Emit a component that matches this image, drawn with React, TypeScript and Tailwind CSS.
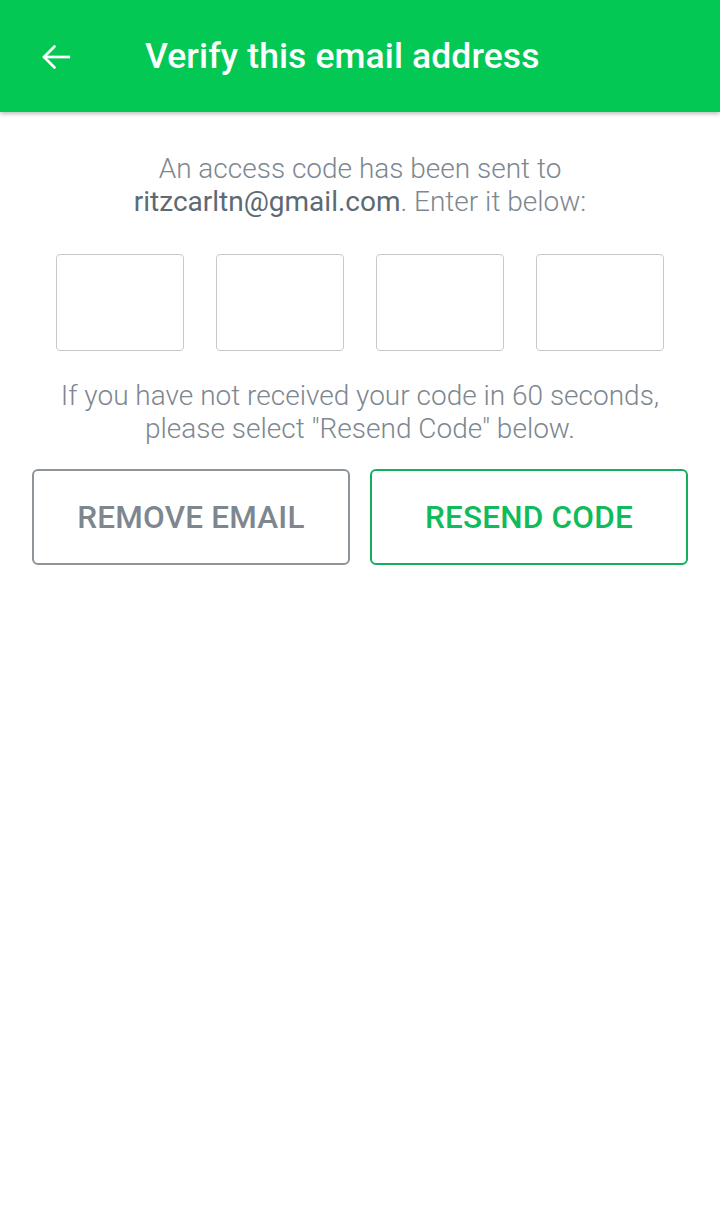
import React from "react";

export default function App() {
  return (
    <div className="w-[720px] h-[1232px] bg-white" style={{ fontFamily: "Roboto, 'Noto Sans', sans-serif" }}>
      <div className="h-[112px] bg-[#03c853] flex items-center shadow-[0_2px_4px_rgba(0,0,0,0.25)] relative">
        <div className="w-[145px] flex items-center pl-[38px] pt-[1px]">
          <svg width="36" height="36" viewBox="0 0 24 24" fill="none" stroke="white" strokeWidth="1.8" strokeLinecap="square">
            <path d="M20.5 12H4.5" />
            <path d="M11 5l-7 7 7 7" strokeLinecap="round" strokeLinejoin="miter" />
          </svg>
        </div>
        <div className="text-white text-[35.5px] font-medium leading-none tracking-[0.1px] pt-[2px]">Verify this email address</div>
      </div>
      <div className="flex flex-col items-center">
        <p className="mt-[40px] text-center text-[28px] leading-[33px] font-light text-[#7d8790]">
          An access code has been sent to
          <br />
          <span className="font-normal text-[#5d6973]">ritzcarltn@gmail.com</span>. Enter it below:
        </p>
        <div className="mt-[36px] flex gap-[32px]">
          {[0, 1, 2, 3].map((i) => (
            <div key={i} className="w-[128px] h-[97px] border border-[#c9c9c9] rounded-[4px]" />
          ))}
        </div>
        <p className="mt-[28px] text-center text-[28px] leading-[33px] font-light text-[#7d8790]">
          If you have not received your code in 60 seconds,
          <br />
          please select "Resend Code" below.
        </p>
        <div className="mt-[24px] flex gap-[20px]">
          <button className="w-[318px] h-[96px] border-2 border-[#8d959b] rounded-[6px] text-[31.5px] font-medium text-[#7e878f] tracking-[0.2px] pt-[2px]">
            REMOVE EMAIL
          </button>
          <button className="w-[318px] h-[96px] border-2 border-[#12b05d] rounded-[6px] text-[31.5px] font-medium text-[#0fbb5b] tracking-[0.2px] pt-[2px]">
            RESEND CODE
          </button>
        </div>
      </div>
    </div>
  );
}
